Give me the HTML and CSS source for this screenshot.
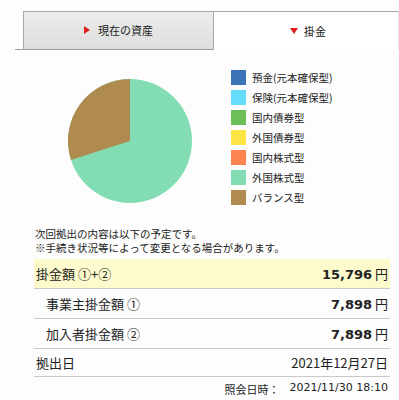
FILE: index.html
```html
<!DOCTYPE html>
<html lang="ja">
<head>
<meta charset="utf-8">
<link rel="stylesheet" href="styles.css">
</head>
<body>
<div class="tabs">
  <div class="tab-gap"></div>
  <div class="tab tab-off"><span class="tri-right"></span>現在の資産</div>
  <div class="tab tab-on"><span class="tri-down"></span>掛金</div>
</div>
<div class="chart">
  <svg class="pie" width="126" height="126" viewBox="-63 -63 126 126">
    <circle cx="0" cy="0" r="62" fill="#82ddb5"/>
    <path d="M0 0 L0 -62 A62 62 0 0 0 -59 19.1 Z" fill="#b08b4f"/>
  </svg>
  <ul class="legend">
    <li><span class="sw" style="background:#3a74b6"></span>預金(元本確保型)</li>
    <li><span class="sw" style="background:#66dcfc"></span>保険(元本確保型)</li>
    <li><span class="sw" style="background:#6cbf58"></span>国内債券型</li>
    <li><span class="sw" style="background:#fde445"></span>外国債券型</li>
    <li><span class="sw" style="background:#fd8450"></span>国内株式型</li>
    <li><span class="sw" style="background:#82ddb5"></span>外国株式型</li>
    <li><span class="sw" style="background:#b08b4f"></span>バランス型</li>
  </ul>
</div>
<p class="note">次回拠出の内容は以下の予定です。<br>※手続き状況等によって変更となる場合があります。</p>
<div class="table">
  <div class="row total"><span>掛金額 ①+②</span><span><b>15,796</b> 円</span></div>
  <div class="row sub"><span>事業主掛金額 ①</span><span><b>7,898</b> 円</span></div>
  <div class="row sub"><span>加入者掛金額 ②</span><span><b>7,898</b> 円</span></div>
  <div class="row last"><span>拠出日</span><span>2021年12月27日</span></div>
</div>
<div class="stamp"><span class="stamp-label">照会日時：</span><span class="stamp-val">2021/11/30 18:10</span></div>
</body>
</html>
```
FILE: styles.css
```css
html, body {
  margin: 0;
  padding: 0;
  background: #fdfdfd;
  font-family: "Noto Sans CJK JP", "DejaVu Sans", sans-serif;
  color: #222;
}
.tabs {
  display: flex;
  margin: 11px 0 0 15px;
  height: 39px;
}
.tab-gap {
  width: 8px;
  border-bottom: 1px solid #9a9a9a;
}
.tab {
  display: flex;
  align-items: center;
  justify-content: center;
  font-size: 11px;
  box-sizing: border-box;
  padding-bottom: 1px;
}
.tab-off {
  width: 191px;
  border: 1px solid #a8a8a8;
  border-bottom-color: #9a9a9a;
  background: linear-gradient(#ececec, #dedede);
}
.tab-on {
  flex: 1;
  border-top: 1px solid #a8a8a8;
  border-right: 1px solid #e4e4e4;
  background: #fff;
  padding-left: 4px;
}
.tri-right {
  width: 0;
  height: 0;
  border-left: 6px solid #e02020;
  border-top: 4px solid transparent;
  border-bottom: 4px solid transparent;
  margin-right: 8px;
}
.tri-down {
  width: 0;
  height: 0;
  border-top: 6px solid #e02020;
  border-left: 4px solid transparent;
  border-right: 4px solid transparent;
  margin-right: 6px;
}
.chart {
  display: flex;
  height: 177px;
}
.pie {
  margin: 28px 0 0 67px;
}
.legend {
  list-style: none;
  margin: 17px 0 0 38px;
  padding: 0;
  font-size: 10.5px;
}
.legend li {
  display: flex;
  align-items: center;
  height: 20px;
}
.sw {
  width: 15px;
  height: 15px;
  margin-right: 6px;
}
.note {
  margin: 0 0 0 35px;
  font-size: 10.5px;
  line-height: 14px;
}
.table {
  margin: 4px 9px 0 34px;
  font-size: 13px;
}
.row {
  display: flex;
  justify-content: space-between;
  align-items: center;
  height: 29px;
  border-bottom: 1px solid #c8c8c8;
  padding: 0 2px;
}
.row.total {
  background: #fdfbcd;
}
.row.sub {
  padding-left: 12px;
}
.row.last {
  height: 27px;
}
.row b {
  font-family: "DejaVu Sans", sans-serif;
  font-size: 13px;
}
.stamp {
  display: flex;
  justify-content: flex-end;
  margin: 4px 11px 0 0;
  font-size: 11px;
}
.stamp-label {
  margin-right: 10px;
}
.stamp-val {
  font-family: "DejaVu Sans", sans-serif;
}
```
